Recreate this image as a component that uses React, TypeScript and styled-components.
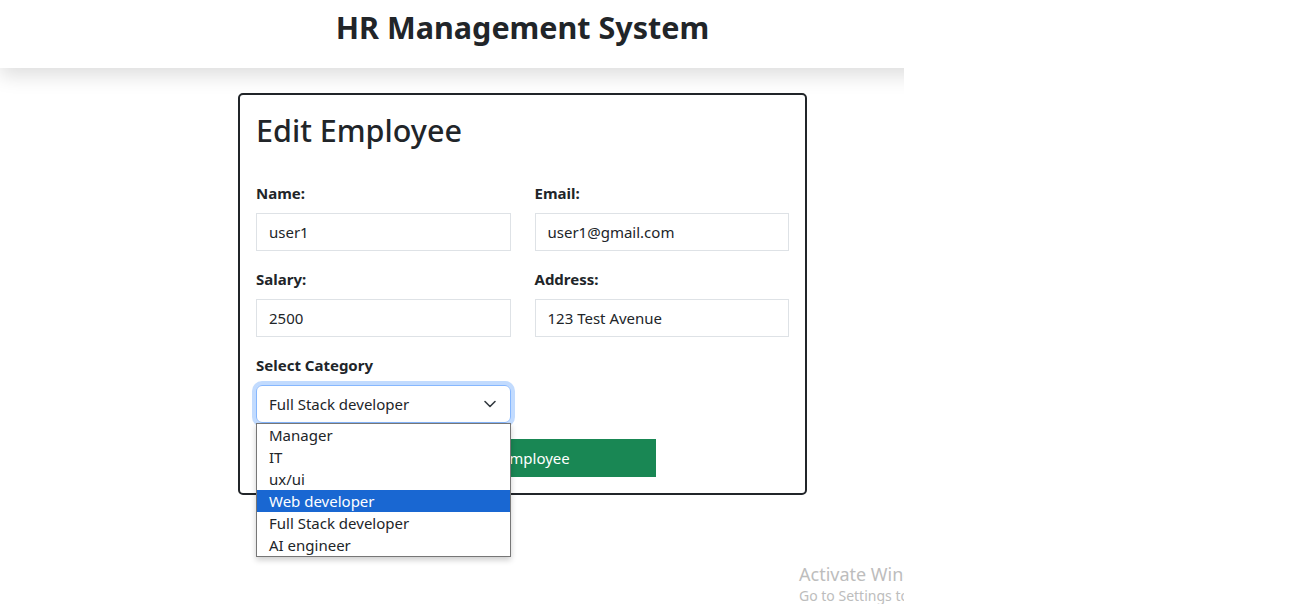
import React from "react";
import styled, { createGlobalStyle } from "styled-components";

const Global = createGlobalStyle`
  html, body { margin: 0; padding: 0; background: #fff; }
  body { font-family: "Noto Sans", "Open Sans", sans-serif; color: #212529; }
  * { box-sizing: border-box; }
`;

const Screen = styled.div`
  position: relative;
  width: 1314px;
  height: 604px;
  overflow: hidden;
  background: #fff;
`;

const Viewport = styled.div`
  position: relative;
  width: 904px;
  height: 604px;
  overflow: hidden;
`;

const Page = styled.div`
  width: 1045px;
  display: flex;
  flex-direction: column;
`;

const Header = styled.header`
  height: 68px;
  background: #fff;
  box-shadow: 0 8px 18px rgba(0, 0, 0, 0.13);
  display: flex;
  justify-content: center;
  padding-top: 8px;
  position: relative;
  z-index: 1;
`;

const Title = styled.h1`
  margin: 0;
  font-size: 30.5px;
  line-height: 38px;
  font-weight: 700;
  color: #212529;
`;

const Main = styled.main`
  display: flex;
  justify-content: center;
  padding-top: 25px;
`;

const Card = styled.div`
  width: 569px;
  border: 2px solid #212529;
  border-radius: 5px;
  padding: 16px;
  display: flex;
  flex-direction: column;
`;

const Heading = styled.h2`
  margin: 0 0 32px 0;
  font-size: 30.5px;
  line-height: 38px;
  font-weight: 500;
`;

const Form = styled.form`
  display: grid;
  grid-template-columns: 1fr 1fr;
  column-gap: 24px;
  row-gap: 16px;
`;

const Field = styled.div`
  display: flex;
  flex-direction: column;
  position: relative;
`;

const Label = styled.label`
  font-size: 15px;
  line-height: 24px;
  font-weight: 700;
  margin-bottom: 8px;
`;

const Input = styled.div`
  height: 38px;
  border: 1px solid #dee2e6;
  padding: 0 12px;
  display: flex;
  align-items: center;
  font-size: 15px;
  color: #212529;
`;

const Select = styled.div`
  height: 38px;
  border: 1px solid #86b7fe;
  border-radius: 6px;
  box-shadow: 0 0 0 4px rgba(13, 110, 253, 0.25);
  padding: 0 12px;
  display: flex;
  align-items: center;
  justify-content: space-between;
  font-size: 15px;
`;

const Dropdown = styled.ul`
  position: absolute;
  top: 70px;
  left: 0;
  right: 0;
  margin: 0;
  padding: 0;
  list-style: none;
  background: #fff;
  border: 1px solid #767676;
  box-shadow: 0 3px 6px rgba(0, 0, 0, 0.2);
  z-index: 5;
`;

const Option = styled.li<{ $active?: boolean }>`
  height: 22px;
  line-height: 22px;
  padding-left: 12px;
  font-size: 15px;
  background: ${(p) => (p.$active ? "#1967d2" : "transparent")};
  color: ${(p) => (p.$active ? "#fff" : "#212529")};
`;

const ButtonRow = styled.div`
  grid-column: 1 / 3;
`;

const Button = styled.button`
  width: 400px;
  height: 38px;
  border: none;
  background: #198754;
  color: #fff;
  font-family: inherit;
  font-size: 15px;
  padding-left: 134px;
`;

const Watermark = styled.div`
  position: absolute;
  left: 799px;
  top: 562px;
  color: #bdbdbd;
  white-space: nowrap;
`;

const WmTitle = styled.div`
  font-size: 18px;
  line-height: 24px;
`;

const WmSub = styled.div`
  font-size: 14px;
  line-height: 20px;
`;

const options = ["Manager", "IT", "ux/ui", "Web developer", "Full Stack developer", "AI engineer"];

export default function App() {
  return (
    <Screen>
      <Global />
      <Viewport>
        <Page>
          <Header>
            <Title>HR Management System</Title>
          </Header>
          <Main>
            <Card>
              <Heading>Edit Employee</Heading>
              <Form>
                <Field>
                  <Label>Name:</Label>
                  <Input>user1</Input>
                </Field>
                <Field>
                  <Label>Email:</Label>
                  <Input>user1@gmail.com</Input>
                </Field>
                <Field>
                  <Label>Salary:</Label>
                  <Input>2500</Input>
                </Field>
                <Field>
                  <Label>Address:</Label>
                  <Input>123 Test Avenue</Input>
                </Field>
                <Field>
                  <Label>Select Category</Label>
                  <Select>
                    <span>Full Stack developer</span>
                    <svg width="16" height="16" viewBox="0 0 16 16" fill="none">
                      <path d="M3 5.5l5 5 5-5" stroke="#343a40" strokeWidth="1.6" strokeLinecap="round" strokeLinejoin="round" />
                    </svg>
                  </Select>
                  <Dropdown>
                    {options.map((o) => (
                      <Option key={o} $active={o === "Web developer"}>
                        {o}
                      </Option>
                    ))}
                  </Dropdown>
                </Field>
                <div />
                <ButtonRow>
                  <Button type="button">Edit Employee</Button>
                </ButtonRow>
              </Form>
            </Card>
          </Main>
        </Page>
        <Watermark>
          <WmTitle>Activate Windows</WmTitle>
          <WmSub>Go to Settings to activate Windows.</WmSub>
        </Watermark>
      </Viewport>
    </Screen>
  );
}
